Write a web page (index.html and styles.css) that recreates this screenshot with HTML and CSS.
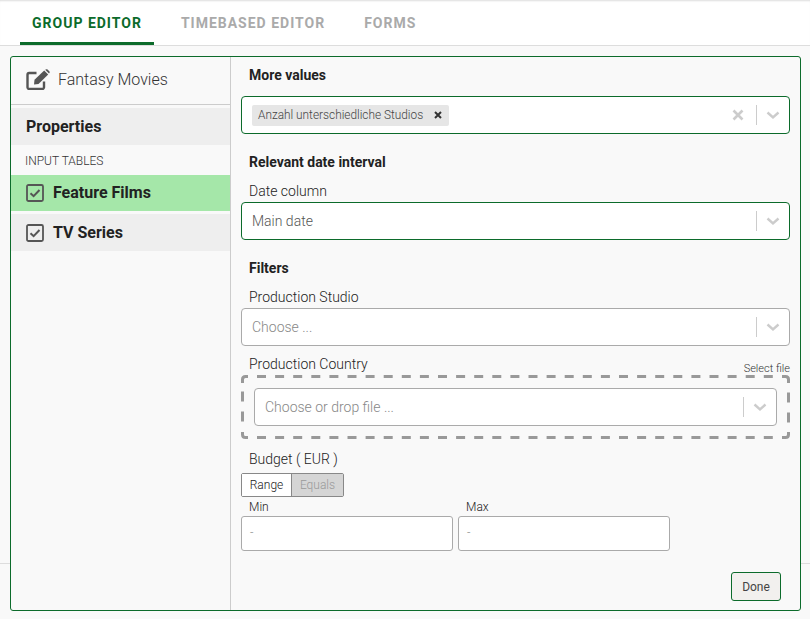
FILE: index.html
```html
<!DOCTYPE html>
<html>
<head>
	<meta charset="utf-8">
	<meta name="viewport" content="width=device-width, initial-scale=1">
	<title>Group editor</title>
	<link rel="stylesheet" href="styles.css">
</head>
<body>
	<div class="tabs">
		<a class="tab active">GROUP EDITOR</a>
		<a class="tab">TIMEBASED EDITOR</a>
		<a class="tab">FORMS</a>
	</div>

	<div class="content">
		<div class="footer-line"></div>
		<div class="panel">
			<div class="side">
				<div class="side-head">
					<svg class="edit-icon" width="24" height="21" viewBox="0 0 24 21">
						<path d="M10.5 4H3.2A1.7 1.7 0 0 0 1.500 5.700V18.300A1.700 1.700 0 0 0 3.200 20H16.300A1.700 1.700 0 0 0 18 18.300V12.500" fill="none" stroke="#555" stroke-width="2.400"/>
						<path d="M8.500 10.800L18.200 1.600L22.200 5.600L12.500 15L8 15.500Z" fill="#555"/>
						<path d="M19.200 0.800L20.300 0.200Q21 0 21.600 0.500L23.500 2.400Q24 3 23.500 3.800L23 4.600Z" fill="#555"/>
					</svg>
					<span>Fantasy Movies</span>
				</div>
				<div class="side-item plain">Properties</div>
				<div class="side-label">INPUT TABLES</div>
				<div class="side-item selected">
					<svg width="18" height="18" viewBox="0 0 18 18"><rect x="1" y="1" width="16" height="16" rx="1.500" fill="none" stroke="#555" stroke-width="1.800"/><path d="M4.500 9.200L7.600 12.200L13.500 6" fill="none" stroke="#555" stroke-width="2"/></svg>
					<span>Feature Films</span>
				</div>
				<div class="side-item second">
					<svg width="18" height="18" viewBox="0 0 18 18"><rect x="1" y="1" width="16" height="16" rx="1.500" fill="none" stroke="#555" stroke-width="1.800"/><path d="M4.500 9.200L7.600 12.200L13.500 6" fill="none" stroke="#555" stroke-width="2"/></svg>
					<span>TV Series</span>
				</div>
			</div>

			<div class="main">
				<h3 class="first">More values</h3>
				<div class="select focus chips">
					<div class="value">
						<span class="chip">Anzahl unterschiedliche Studios <b>
							<svg width="8" height="8" viewBox="0 0 8 8"><path d="M1 1L7 7M7 1L1 7" stroke="#333" stroke-width="2"/></svg>
						</b></span>
					</div>
					<svg class="clear" width="12" height="12" viewBox="0 0 12 12"><path d="M1.500 1.500L10.500 10.500M10.500 1.500L1.500 10.500" stroke="#ccc" stroke-width="2.600"/></svg>
					<i class="sep"></i>
					<svg class="arrow" width="14" height="9" viewBox="0 0 14 9"><path d="M1.500 1.500L7 6.500L12.500 1.500" fill="none" stroke="#ccc" stroke-width="2.400"/></svg>
				</div>

				<h3 class="date-head">Relevant date interval</h3>
				<label class="lbl">Date column</label>
				<div class="select focus">
					<div class="value dark">Main date</div>
					<i class="sep"></i>
					<svg class="arrow" width="14" height="9" viewBox="0 0 14 9"><path d="M1.500 1.500L7 6.500L12.500 1.500" fill="none" stroke="#ccc" stroke-width="2.400"/></svg>
				</div>

				<h3 class="filters-head">Filters</h3>
				<label class="lbl">Production Studio</label>
				<div class="select">
					<div class="value">Choose ...</div>
					<i class="sep"></i>
					<svg class="arrow" width="14" height="9" viewBox="0 0 14 9"><path d="M1.500 1.500L7 6.500L12.500 1.500" fill="none" stroke="#ccc" stroke-width="2.400"/></svg>
				</div>

				<div class="country-row">
					<label class="lbl">Production Country</label>
					<span class="select-file">Select file</span>
				</div>
				<div class="dropzone">
					<svg class="dashes" width="549" height="64" viewBox="0 0 549 64">
						<!-- corners -->
						<path d="M1.500 8V4.500Q1.500 1.500 4.500 1.500H7M541 1.500H544.500Q547.500 1.500 547.500 4.500V8M1.500 57V59.500Q1.500 62.500 4.500 62.500H7M541 62.500H544.500Q547.500 62.500 547.500 59.500V57" fill="none" stroke="#999" stroke-width="3"/>
						<!-- long sides -->
						<path d="M16 1.500H533M16 62.500H533" fill="none" stroke="#999" stroke-width="3" stroke-dasharray="9 9.100"/>
						<!-- short sides -->
						<path d="M1.500 16.500V26.500M1.500 36.500V46.500M547.500 17.500V27.500M547.500 37.500V47.500" fill="none" stroke="#999" stroke-width="3"/>
					</svg>
					<div class="select">
						<div class="value">Choose or drop file ...</div>
						<i class="sep"></i>
						<svg class="arrow" width="14" height="9" viewBox="0 0 14 9"><path d="M1.500 1.500L7 6.500L12.500 1.500" fill="none" stroke="#ccc" stroke-width="2.400"/></svg>
					</div>
				</div>

				<label class="lbl budget">Budget ( EUR )</label>
				<div class="toggle">
					<span class="on">Range</span><span class="off">Equals</span>
				</div>
				<div class="range">
					<div class="range-col">
						<label>Min</label>
						<div class="num">-</div>
					</div>
					<div class="range-col">
						<label>Max</label>
						<div class="num">-</div>
					</div>
				</div>

				<div class="actions">
					<button type="button" class="done">Done</button>
				</div>
			</div>
		</div>
	</div>
</body>
</html>
```

FILE: styles.css
```css
* {
	box-sizing: border-box;
}
html, body {
	margin: 0;
	padding: 0;
	height: 100%;
}
body {
	font-family: Roboto, "Liberation Sans", sans-serif;
	font-size: 14px;
	color: #222;
	background: #f9f9f9;
	overflow: hidden;
}

/* tabs */
.tabs {
	height: 46px;
	display: flex;
	padding-left: 20px;
	background: #fff;
	border-bottom: 1px solid #ddd;
	box-shadow: inset 0 2px 2px -1px #ddd;
}
.tab {
	height: 45px;
	padding: 15px 12px 0;
	margin-right: 15px;
	font-size: 14px;
	line-height: 17px;
	font-weight: 700;
	letter-spacing: 1px;
	color: #aaa;
}
.tab.active {
	color: #0c6b2b;
	border-bottom: 3px solid #0c6b2b;
}

/* panel */
.content {
	position: relative;
	padding: 10px 9px 0 10px;
}
.footer-line {
	position: absolute;
	left: 0;
	right: 0;
	top: 517px;
	height: 1px;
	background: #ddd;
}
.panel {
	position: relative;
	height: 555px;
	display: flex;
	background: #f9f9f9;
	border: 1px solid #0c6b2b;
	border-radius: 3px;
}

/* left column */
.side {
	width: 220px;
	flex: none;
	border-right: 1px solid #ccc;
}
.side-head {
	height: 48px;
	display: flex;
	align-items: center;
	padding: 0 0 2px 15px;
	border-bottom: 1px solid #ccc;
	margin-bottom: 3px;
	font-size: 16px;
	font-weight: 300;
	color: #333;
}
.side-head span {
	margin-left: 8px;
}
.side-item {
	display: flex;
	align-items: center;
	height: 37px;
	padding-left: 15px;
	background: #eee;
	font-size: 16px;
	font-weight: 700;
}
.side-item span {
	margin-left: 9px;
}
.side-item.selected {
	height: 36px;
	padding-bottom: 1px;
	background: #a5e7a9;
}
.side-item.second {
	margin-top: 3px;
}
.side-label {
	height: 30px;
	padding: 9px 0 0 14px;
	font-size: 12px;
	line-height: 14px;
	font-weight: 300;
	color: #333;
}

/* right column */
.main {
	flex: 1;
	padding: 0 10px;
}
h3 {
	margin: 0;
	padding-left: 8px;
	font-size: 14px;
	line-height: 17px;
	font-weight: 700;
	color: #222;
}
h3.first {
	padding-top: 10px;
	margin-bottom: 12px;
}
h3.date-head {
	margin-top: 20px;
}
h3.filters-head {
	margin-top: 20px;
}
.lbl {
	display: block;
	padding-left: 8px;
	font-size: 14px;
	line-height: 17px;
	font-weight: 300;
	color: #222;
}
.date-head + .lbl {
	margin-top: 12px;
	margin-bottom: 2px;
}
.filters-head + .lbl {
	margin-top: 12px;
	margin-bottom: 2px;
}

.select {
	height: 38px;
	display: flex;
	align-items: center;
	background: #fff;
	border: 1px solid #aaa;
	border-radius: 4px;
}
.select.focus {
	border-color: #0c6b2b;
}
.value {
	flex: 1;
	padding-left: 10px;
	font-size: 14px;
	font-weight: 300;
	color: #888;
}
.value.dark {
	color: #555;
}
.sep {
	width: 1px;
	height: 20px;
	background: #ccc;
}
.arrow {
	margin: 0 9px 0 9px;
}
.clear {
	margin-right: 12px;
}
.chip {
	display: inline-flex;
	align-items: center;
	height: 21px;
	padding: 0 7px 0 6px;
	background: #e6e6e6;
	border-radius: 2px;
	font-size: 11.850px;
	font-weight: 300;
	color: #444;
}
.chip b {
	display: flex;
	margin-left: 11px;
}

.country-row {
	display: flex;
	justify-content: space-between;
	align-items: flex-end;
	margin-top: 10px;
}
.select-file {
	font-size: 11px;
	line-height: 12px;
	font-weight: 300;
	color: #333;
	margin-bottom: -2px;
}
.dropzone {
	position: relative;
	margin-top: 2px;
	padding: 13px;
}
.dashes {
	position: absolute;
	left: 0;
	top: 0;
}
.dropzone .select {
	position: relative;
}

.budget {
	margin-top: 12px;
}
.toggle {
	display: flex;
	width: 103px;
	height: 24px;
	margin-top: 5px;
	border: 1px solid #888;
	border-radius: 2px;
	font-size: 12px;
	line-height: 22px;
	font-weight: 300;
	text-align: center;
}
.toggle .on {
	width: 50px;
	background: #fff;
	color: #222;
	border-right: 1px solid #888;
}
.toggle .off {
	flex: 1;
	background: #d5d5d5;
	color: #999;
}
.range {
	display: flex;
	gap: 5px;
	margin-top: 3px;
}
.range-col {
	width: 212px;
}
.range-col label {
	display: block;
	padding-left: 8px;
	font-size: 12px;
	line-height: 15px;
	font-weight: 300;
	color: #222;
}
.num {
	height: 35px;
	margin-top: 1px;
	padding-left: 8px;
	background: #fff;
	border: 1px solid #aaa;
	border-radius: 3px;
	font-size: 12px;
	line-height: 33px;
	font-weight: 300;
	color: #888;
}

.actions {
	display: flex;
	justify-content: flex-end;
	margin-top: 21px;
}
.done {
	width: 50px;
	height: 29px;
	margin-right: 9px;
	padding: 0;
	background: #f2f0ee;
	border: 1px solid #0c6b2b;
	border-radius: 3px;
	font-family: Roboto, "Liberation Sans", sans-serif;
	font-size: 12px;
	color: #444;
}
```
